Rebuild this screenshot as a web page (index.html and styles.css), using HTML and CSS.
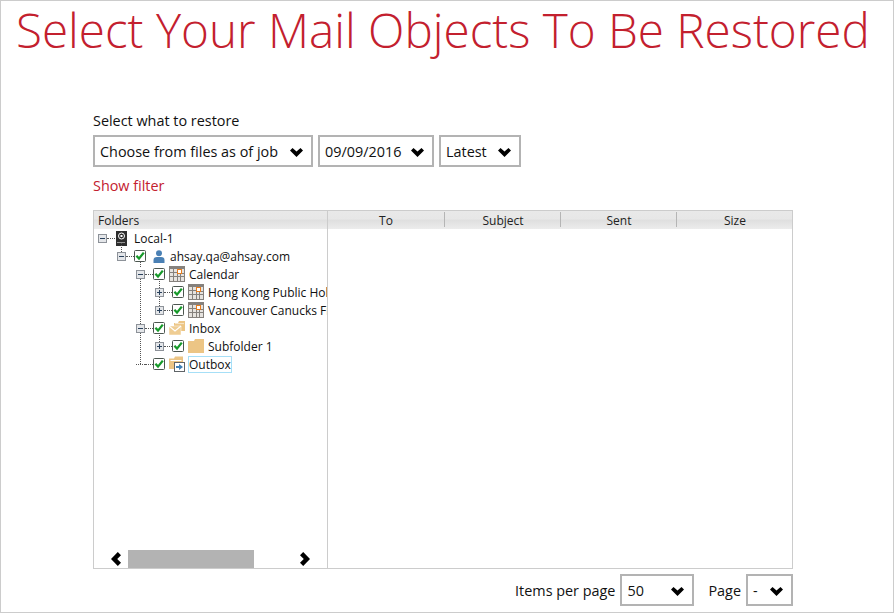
FILE: index.html
```html
<!DOCTYPE html>
<html lang="en">
<head>
    <meta charset="UTF-8">
    <title>Select Your Mail Objects To Be Restored</title>
    <link rel="stylesheet" href="styles.css">
</head>
<body>
    <svg class="defs" width="0" height="0">
        <symbol id="chevron" viewBox="0 0 13 9">
            <path d="M0 2.5 L2.5 0 L6.5 3.5 L10.5 0 L13 2.5 L6.5 9 Z" fill="#000"/>
        </symbol>
        <symbol id="check" viewBox="0 0 12 12">
            <rect x="0.5" y="0.5" width="11" height="11" rx="1" fill="#fff" stroke="#4c5650"/>
            <path d="M2.4 5.8 L5 8.6 L9.8 2.6" fill="none" stroke="#179a2a" stroke-width="2.3"/>
        </symbol>
        <symbol id="calendar" viewBox="0 0 16 16">
            <rect x="0" y="0" width="16" height="16" fill="#85817d"/>
            <path d="M1 3 H4 V6 H1 Z M5 3 H8 V6 H5 Z M1 7 H4 V10 H1 Z M5 7 H8 V10 H5 Z M9 8 H11 V10 H9 Z M12 8 H15 V10 H12 Z M1 11 H4 V15 H1 Z M5 11 H8 V15 H5 Z M9 11 H11 V15 H9 Z M12 11 H15 V15 H12 Z M13 3 H15 V7 H13 Z" fill="#e6e3df"/>
            <rect x="8.5" y="3.5" width="4" height="4" fill="#fff" stroke="#e87d1e"/>
        </symbol>
        <symbol id="folder" viewBox="0 0 16 14">
            <path d="M0 2 H6 L7 0 H16 V14 H0 Z" fill="#ecc585"/>
        </symbol>
        <symbol id="inbox" viewBox="0 0 16 16">
            <path d="M5 3 H9 L10 1 H16 V11 H5 Z" fill="#ecc585"/>
            <path d="M6 3.6 H15" stroke="#fff" stroke-width="0.6"/>
            <path d="M0 6 H12 V15 H0 Z" fill="#efcd93" stroke="#fff" stroke-width="0.5"/>
            <path d="M0 6 L6 11 L12 6" fill="none" stroke="#fff" stroke-width="1.1"/>
        </symbol>
        <symbol id="outbox" viewBox="0 0 16 16">
            <path d="M0 2.5 H5 L6 0.5 H14 V13 H0 Z" fill="#ecc585"/>
            <path d="M1.5 4.5 H12.5" stroke="#fff"/>
            <rect x="5.5" y="6.5" width="10" height="9" fill="#fff" stroke="#5f6468"/>
            <path d="M7 10 H10 V8 L14 11 L10 14 V12 H7 Z" fill="#3f7fb5"/>
        </symbol>
    </svg>

    <div class="window">
        <h1 class="title">Select Your Mail Objects To Be Restored</h1>

        <div class="content">
            <div class="field-label">Select what to restore</div>
            <div class="selects">
                <div class="dropdown dd-job"><span>Choose from files as of job</span><svg class="chev"><use href="#chevron"/></svg></div>
                <div class="dropdown dd-date"><span>09/09/2016</span><svg class="chev"><use href="#chevron"/></svg></div>
                <div class="dropdown dd-latest"><span>Latest</span><svg class="chev"><use href="#chevron"/></svg></div>
            </div>
            <a class="filter-link">Show filter</a>

            <div class="browser">
                <div class="left-pane">
                    <div class="head head-folders">Folders</div>
                    <div class="tree">
                        <div class="row lvl-0">
                            <span class="exp minus"></span><span class="tick"></span>
                            <svg class="ico-server" viewBox="0 0 11 15" width="11" height="15">
                                <rect width="11" height="15" fill="#2e2e2e"/>
                                <circle cx="5.5" cy="5" r="3" fill="none" stroke="#fff"/>
                                <rect x="4.5" y="4" width="2" height="2" fill="#fff"/>
                                <path d="M1.5 11.5 H9.5" stroke="#fff" stroke-dasharray="1 1"/>
                            </svg>
                            <span class="name">Local-1</span>
                        </div>
                        <div class="row lvl-1 stem">
                            <span class="exp minus"></span><span class="tick"></span>
                            <svg class="cb"><use href="#check"/></svg>
                            <svg class="ico-user" viewBox="0 0 12 13" width="12" height="13">
                                <circle cx="6" cy="3.2" r="3" fill="#4a80b4"/>
                                <path d="M0.5 13 V10 Q0.5 7 4 7 H8 Q11.5 7 11.5 10 V13 Z" fill="#4a80b4"/>
                            </svg>
                            <span class="name">ahsay.qa@ahsay.com</span>
                        </div>
                        <div class="branch">
                            <div class="row lvl-2">
                                <span class="exp minus"></span><span class="tick"></span>
                                <svg class="cb"><use href="#check"/></svg>
                                <svg class="ico"><use href="#calendar"/></svg>
                                <span class="name">Calendar</span>
                            </div>
                            <div class="sub">
                                <div class="row lvl-3">
                                    <span class="exp plus"></span><span class="tick"></span>
                                    <svg class="cb"><use href="#check"/></svg>
                                    <svg class="ico"><use href="#calendar"/></svg>
                                    <span class="name">Hong Kong Public Holidays</span>
                                </div>
                                <div class="row lvl-3">
                                    <span class="exp plus"></span><span class="tick"></span>
                                    <svg class="cb"><use href="#check"/></svg>
                                    <svg class="ico"><use href="#calendar"/></svg>
                                    <span class="name">Vancouver Canucks Fixtures</span>
                                </div>
                            </div>
                            <div class="row lvl-2">
                                <span class="exp minus"></span><span class="tick"></span>
                                <svg class="cb"><use href="#check"/></svg>
                                <svg class="ico"><use href="#inbox"/></svg>
                                <span class="name">Inbox</span>
                            </div>
                            <div class="sub sub-single">
                                <div class="row lvl-3">
                                    <span class="exp plus"></span><span class="tick"></span>
                                    <svg class="cb"><use href="#check"/></svg>
                                    <svg class="ico"><use href="#folder"/></svg>
                                    <span class="name">Subfolder 1</span>
                                </div>
                            </div>
                            <div class="row lvl-2">
                                <span class="exp none"></span><span class="tick"></span>
                                <svg class="cb"><use href="#check"/></svg>
                                <svg class="ico"><use href="#outbox"/></svg>
                                <span class="name selected">Outbox</span>
                            </div>
                        </div>
                    </div>
                    <div class="hscroll">
                        <svg class="arrow" viewBox="0 0 10 14"><path d="M10 3.2 L6.2 7 L10 10.8 L6.8 14 L0 7 L6.8 0 Z" fill="#000"/></svg>
                        <div class="thumb"></div>
                        <svg class="arrow arrow-right" viewBox="0 0 10 14"><path d="M0 3.2 L3.8 7 L0 10.8 L3.2 14 L10 7 L3.2 0 Z" fill="#000"/></svg>
                    </div>
                </div>
                <div class="right-pane">
                    <div class="head columns">
                        <div class="col col-to">To</div>
                        <div class="col">Subject</div>
                        <div class="col">Sent</div>
                        <div class="col">Size</div>
                    </div>
                </div>
            </div>

            <div class="pager">
                <span class="pager-label">Items per page</span>
                <div class="dropdown dd-items"><span>50</span><svg class="chev"><use href="#chevron"/></svg></div>
                <span class="pager-label label-page">Page</span>
                <div class="dropdown dd-page"><span>-</span><svg class="chev"><use href="#chevron"/></svg></div>
            </div>
        </div>
    </div>
</body>
</html>
```

FILE: styles.css
```css
* {
    box-sizing: border-box;
}
html, body {
    margin: 0;
    padding: 0;
    background: #fff;
}
body {
    font-family: "Open Sans", sans-serif;
    font-size: 14.4px;
    color: #111;
    overflow: hidden;
}
.defs {
    position: absolute;
}
.window {
    width: 894px;
    height: 613px;
    border: 1px solid #ccc;
    overflow: hidden;
}
.title {
    margin: 0;
    padding-left: 15px;
    height: 105px;
    font-size: 47.6px;
    line-height: 58px;
    font-weight: 300;
    color: #c3202e;
    white-space: nowrap;
}
.content {
    padding-left: 92px;
    width: 792px;
}
.field-label {
    height: 29px;
    line-height: 30px;
}
.selects {
    display: flex;
    gap: 5px;
}
.dropdown {
    display: flex;
    align-items: center;
    justify-content: space-between;
    height: 32px;
    padding: 0 8px 0 5px;
    border: 2px solid #b3b3b3;
    background: #fff;
}
.chev {
    width: 13px;
    height: 9px;
    flex: none;
    margin-top: 2px;
}
.dd-job { width: 220px; }
.dd-date { width: 116px; }
.dd-latest { width: 82px; }
.dd-items { width: 74px; }
.dd-page { width: 47px; }
.filter-link {
    display: block;
    height: 43px;
    padding-top: 9px;
    line-height: 20px;
    color: #c3202e;
}
.browser {
    display: flex;
    height: 359px;
    border: 1px solid #ccc;
}
.left-pane {
    position: relative;
    width: 234px;
    flex: none;
    border-right: 1px solid #ccc;
    overflow: hidden;
}
.right-pane {
    flex: 1;
}
.head {
    height: 18px;
    font-size: 12px;
    line-height: 19px;
    background: linear-gradient(to bottom, #e9e9e9 0, #e7e7e7 45%, #dfdfdf 50%, #ececec 100%);
    color: #222;
}
.head-folders {
    padding-left: 4px;
}
.columns {
    display: flex;
    padding-top: 1px;
}
.col {
    width: 116px;
    height: 15px;
    padding-left: 1px;
    line-height: 17px;
    text-align: center;
    border-right: 1px solid #b5b5b5;
}
.col-to {
    width: 117px;
    padding-left: 0;
}
.col:last-child {
    width: 115px;
    border-right: none;
}

/* tree */
.row {
    position: relative;
    display: flex;
    align-items: center;
    height: 18px;
    font-size: 12px;
    white-space: nowrap;
}
.lvl-0 { padding-left: 4px; }
.lvl-1 { padding-left: 23px; }
.lvl-2 { padding-left: 42px; }
.lvl-3 { padding-left: 61px; }
.exp {
    position: relative;
    width: 9px;
    height: 9px;
    flex: none;
    border: 1px solid #8d9299;
    background: #e4e6e9;
}
.minus::before, .plus::before {
    content: "";
    position: absolute;
    left: 1px;
    top: 3px;
    width: 5px;
    height: 1px;
    background: #29415c;
}
.plus::after {
    content: "";
    position: absolute;
    left: 3px;
    top: 1px;
    width: 1px;
    height: 5px;
    background: #29415c;
}
.none {
    border: none;
    background: none;
    border-bottom: 1px dotted #555;
    height: 5px;
    align-self: flex-start;
    margin-top: 5px;
}
.tick {
    width: 8px;
    flex: none;
    border-bottom: 1px dotted #555;
}
.cb {
    width: 12px;
    height: 12px;
    flex: none;
}
.ico {
    width: 16px;
    height: 16px;
    flex: none;
    margin-left: 4px;
    margin-right: 4px;
}
.ico-server {
    flex: none;
    margin-left: 1px;
    margin-right: 7px;
}
.ico-user {
    flex: none;
    margin-left: 7px;
    margin-right: 5px;
}
.selected {
    margin-left: -1px;
    margin-top: 1px;
    height: 17px;
    line-height: 15px;
    border: 1px solid #a6dff7;
}
/* dotted tree lines */
.stem::before {
    content: "";
    position: absolute;
    left: 27px;
    top: -4px;
    height: 9px;
    border-left: 1px dotted #555;
}
.stem::after {
    content: "";
    position: absolute;
    left: 46px;
    top: 14px;
    height: 6px;
    border-left: 1px dotted #555;
}
.branch {
    position: relative;
}
.branch::before {
    content: "";
    position: absolute;
    left: 46px;
    top: 14px;
    bottom: 9px;
    border-left: 1px dotted #555;
}
.sub {
    position: relative;
}
.sub::before {
    content: "";
    position: absolute;
    left: 65px;
    top: -4px;
    bottom: 13px;
    border-left: 1px dotted #555;
}
.hscroll {
    position: absolute;
    left: 0;
    right: 0;
    bottom: 0;
    height: 18px;
    display: flex;
    align-items: center;
    padding-left: 17px;
}
.arrow {
    width: 10px;
    height: 14px;
    flex: none;
}
.thumb {
    width: 126px;
    height: 18px;
    margin-left: 7px;
    background: #b3b3b3;
}
.arrow-right {
    margin-left: 46px;
}
.pager {
    display: flex;
    align-items: center;
    justify-content: flex-end;
    margin-top: 5px;
}
.pager-label {
    margin-right: 5px;
}
.label-page {
    margin-left: 14px;
}
```
